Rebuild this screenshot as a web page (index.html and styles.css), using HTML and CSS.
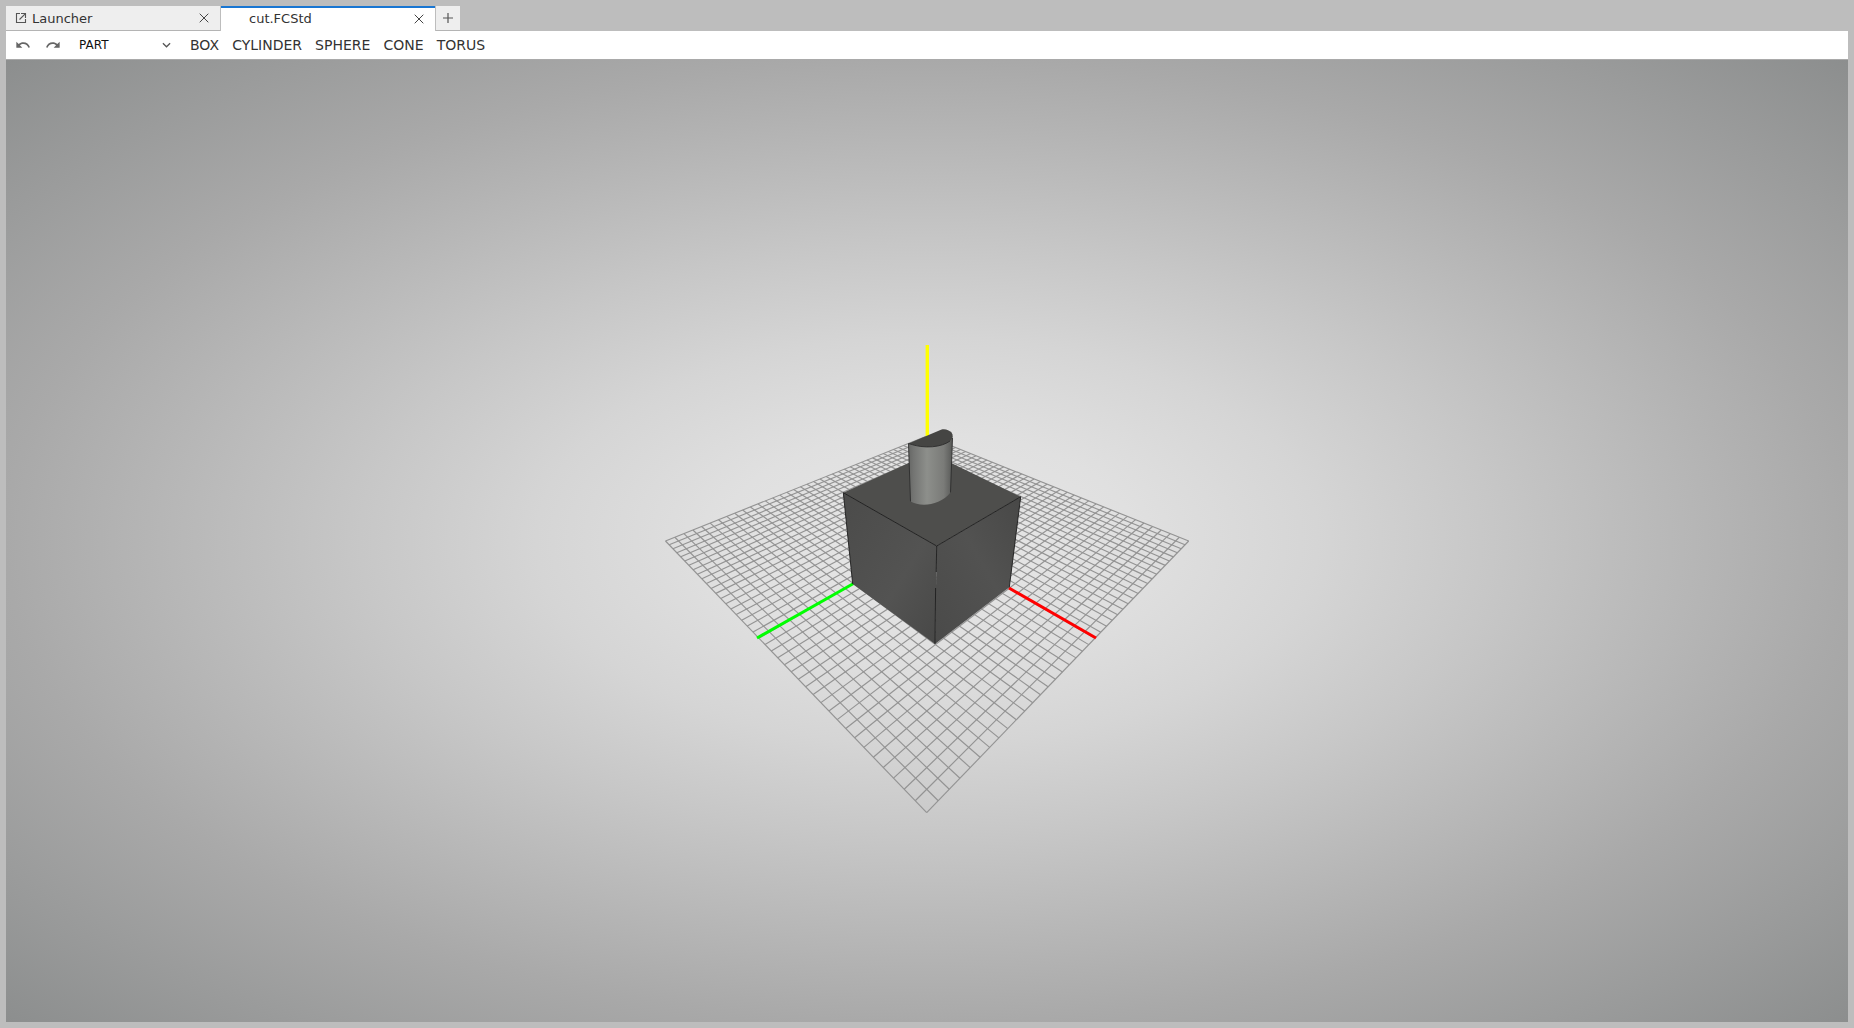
FILE: index.html
```html
<!DOCTYPE html>
<html lang="en">
<head>
<meta charset="utf-8">
<title>cut.FCStd</title>
<link rel="stylesheet" href="styles.css">
</head>
<body>
<div class="app">
  <div class="tabbar">
    <div class="tab tab-launcher">
      <svg class="tab-icon" viewBox="0 0 12 12"><path d="M5 1.5H1.5v9h9V7M6 1.5h4.5V6M10.2 1.8 4.5 7.5"/></svg>
      <span class="tab-label">Launcher</span>
      <svg class="tab-close" viewBox="0 0 10 10"><path d="M.7.7l8.6 8.6M9.3.7.7 9.3"/></svg>
    </div>
    <div class="tab tab-active">
      <span class="tab-label">cut.FCStd</span>
      <svg class="tab-close" viewBox="0 0 10 10"><path d="M.7.7l8.6 8.6M9.3.7.7 9.3"/></svg>
    </div>
    <div class="tab-add"><svg viewBox="0 0 10 10"><path d="M5 0v10M0 5h10"/></svg></div>
  </div>
  <div class="toolbar">
    <svg class="hist" viewBox="0 0 24 24"><path d="M12.5 8c-2.65 0-5.05.99-6.9 2.6L2 7v9h9l-3.62-3.62c1.39-1.16 3.16-1.88 5.12-1.88 3.54 0 6.55 2.31 7.6 5.5l2.37-.78C21.08 11.03 17.15 8 12.5 8z"/></svg>
    <svg class="hist" viewBox="0 0 24 24"><path d="M18.4 10.6C16.55 8.99 14.15 8 11.5 8c-4.65 0-8.58 3.03-9.96 7.22L3.9 16c1.05-3.19 4.05-5.5 7.6-5.5 1.95 0 3.73.72 5.12 1.88L13 16h9V7l-3.6 3.6z"/></svg>
    <div class="select">
      <span>PART</span>
      <svg viewBox="0 0 10 6"><path d="M1 1l4 4 4-4"/></svg>
    </div>
    <div class="tool">BOX</div>
    <div class="tool">CYLINDER</div>
    <div class="tool">SPHERE</div>
    <div class="tool">CONE</div>
    <div class="tool">TORUS</div>
  </div>
  <div class="viewport">
    <svg class="scene" viewBox="6 60 1842 962" preserveAspectRatio="none">
      <defs>
        <linearGradient id="cyl" x1="0" x2="1" y1="0" y2="0">
          <stop offset="0" stop-color="#666765"/>
          <stop offset=".12" stop-color="#747573"/>
          <stop offset=".42" stop-color="#8d8f8b"/>
          <stop offset=".8" stop-color="#7a7b78"/>
          <stop offset="1" stop-color="#585957"/>
        </linearGradient>
        <linearGradient id="boxl" x1="0" x2="1" y1="0" y2="1">
          <stop offset="0" stop-color="#4b4b4a"/>
          <stop offset=".6" stop-color="#535352"/>
          <stop offset="1" stop-color="#484847"/>
        </linearGradient>
        <linearGradient id="boxr" x1="0" x2="1" y1="1" y2="0">
          <stop offset="0" stop-color="#4a4a49"/>
          <stop offset=".55" stop-color="#525251"/>
          <stop offset="1" stop-color="#484847"/>
        </linearGradient>
      </defs>
      <g id="grid" class="grid"></g>
      <line class="axis axis-y" x1="927.3" y1="345" x2="927.3" y2="440"/>
      <line class="axis axis-g" x1="757" y1="638" x2="853.5" y2="583.5"/>
      <line class="axis axis-r" x1="1009" y1="588" x2="1096" y2="638"/>
      <polygon class="face-top" points="843.3,492.7 930.7,453 1020.7,496.7 936.7,546"/>
      <polygon class="face-left" points="843.3,492.7 936.7,546 935,644 852.7,584"/>
      <polygon class="face-right" points="936.7,546 1020.7,496.7 1009.3,587.3 935,644"/>
      <path class="edge" d="M852.7 584 843.3 492.7 936.7 546 1020.7 496.7 1009.3 587.3"/>
      <path class="edge" d="M936.7 546 936.2 572M935.6 588 935 644"/>
      <path class="cyl-body" d="M908.5 443.5 910.5 501.5C920 507 940 506 950.5 492.5L952.5 436C945 446 925 449 908.5 443.5Z"/>
      <path class="cyl-top" d="M908.5 443.5 941 429.7C945 428.5 949 430 951.5 432.5 953.5 435 953 438 950 441 942 447 925 449.5 908.5 443.5Z"/>
      <path class="edge-thin" d="M908.5 443.5 910.5 501.5M952.5 438 950.5 492.5M908.5 443.5C925 449.5 942 447 950 441"/>
    </svg>
  </div>
</div>
<script src="grid.js"></script>
</body>
</html>
```
FILE: styles.css
```css
* { box-sizing: border-box; }
html, body { margin: 0; height: 100%; }
body {
  background: #bdbdbd;
  font-family: "DejaVu Sans", sans-serif;
  color: #333;
  overflow: hidden;
}
.app {
  height: 1028px;
  padding: 6px;
  display: flex;
  flex-direction: column;
}
.tabbar {
  height: 25px;
  display: flex;
  flex: none;
}
.tab {
  width: 214px;
  margin-right: 1px;
  display: flex;
  align-items: center;
  font-size: 13px;
}
.tab-launcher {
  background: #eeeeee;
  border-bottom: 1px solid #b4b4b4;
  padding-left: 9px;
}
.tab-active {
  background: #fff;
  border-top: 2px solid #1976d2;
  padding-left: 28px;
  padding-bottom: 2px;
}
.tab-icon {
  width: 12px;
  height: 12px;
  margin-right: 5px;
  fill: none;
  stroke: #555;
  stroke-width: 1.1;
}
.tab-label { flex: 1; }
.tab-close {
  width: 10px;
  height: 10px;
  margin-right: 11px;
  fill: none;
  stroke: #444;
  stroke-width: 1;
}
.tab-add {
  width: 24px;
  background: #eeeeee;
  border-bottom: 1px solid #b4b4b4;
  display: flex;
  align-items: center;
  justify-content: center;
}
.tab-add svg {
  width: 10px;
  height: 10px;
  fill: none;
  stroke: #555;
  stroke-width: 1.2;
}
.toolbar {
  height: 29px;
  flex: none;
  background: #fff;
  border-bottom: 1px solid #a9a9a9;
  display: flex;
  align-items: center;
  padding-left: 9px;
}
.hist {
  width: 16px;
  height: 16px;
  fill: #666;
  margin-right: 14px;
}
.select {
  width: 111px;
  margin-left: 4px;
  padding-right: 19px;
  display: flex;
  align-items: center;
  justify-content: space-between;
  font-size: 12px;
  color: #111;
}
.select svg {
  width: 9px;
  height: 6px;
  fill: none;
  stroke: #555;
  stroke-width: 1.4;
}
.tool {
  font-size: 14px;
  color: #333;
  margin-right: 13.1px;
}
.viewport {
  flex: 1;
  min-height: 0;
  background: radial-gradient(ellipse farthest-corner at 50% 50%, #e7e7e7 0%, #e0e0e0 16%, #d5d5d5 30%, #c7c7c7 43.5%, #a9a9a9 70.7%, #8c8e8e 100%);
}
.scene { display: block; width: 100%; height: 100%; }
.grid line { stroke: #939393; stroke-width: 1.15; }
.axis { stroke-width: 3; }
.axis-y { stroke: #ffff00; stroke-width: 3.4; }
.axis-g { stroke: #00ff00; }
.axis-r { stroke: #ff0000; }
.face-top { fill: #4e4e4c; }
.face-left { fill: url(#boxl); }
.face-right { fill: url(#boxr); }
.edge { fill: none; stroke: #1c1c1c; stroke-width: .9; }
.edge-thin { fill: none; stroke: #2c2c2c; stroke-width: .9; }
.cyl-body { fill: url(#cyl); }
.cyl-top { fill: #454543; }
```
FILE: grid.js
```js
// Projects a flat N x N floor grid through its four screen-space corners.
(function () {
  var N = 40;
  var P = [[665.5, 541], [926.7, 812.7], [1188.7, 541], [927, 436]];
  var x0 = P[0][0], y0 = P[0][1], x1 = P[1][0], y1 = P[1][1];
  var x2 = P[2][0], y2 = P[2][1], x3 = P[3][0], y3 = P[3][1];
  var dx1 = x1 - x2, dx2 = x3 - x2, sx = x0 - x1 + x2 - x3;
  var dy1 = y1 - y2, dy2 = y3 - y2, sy = y0 - y1 + y2 - y3;
  var det = dx1 * dy2 - dx2 * dy1;
  var g = (sx * dy2 - dx2 * sy) / det;
  var h = (dx1 * sy - sx * dy1) / det;
  var a = x1 - x0 + g * x1, b = x3 - x0 + h * x3;
  var d = y1 - y0 + g * y1, e = y3 - y0 + h * y3;
  function map(u, v) {
    var w = g * u + h * v + 1;
    return [(a * u + b * v + x0) / w, (d * u + e * v + y0) / w];
  }
  var root = document.getElementById("grid");
  function add(p, q) {
    var l = document.createElementNS("http://www.w3.org/2000/svg", "line");
    l.setAttribute("x1", p[0]);
    l.setAttribute("y1", p[1]);
    l.setAttribute("x2", q[0]);
    l.setAttribute("y2", q[1]);
    root.appendChild(l);
  }
  for (var i = 0; i <= N; i++) {
    var t = i / N;
    add(map(t, 0), map(t, 1));
    add(map(0, t), map(1, t));
  }
})();
```
